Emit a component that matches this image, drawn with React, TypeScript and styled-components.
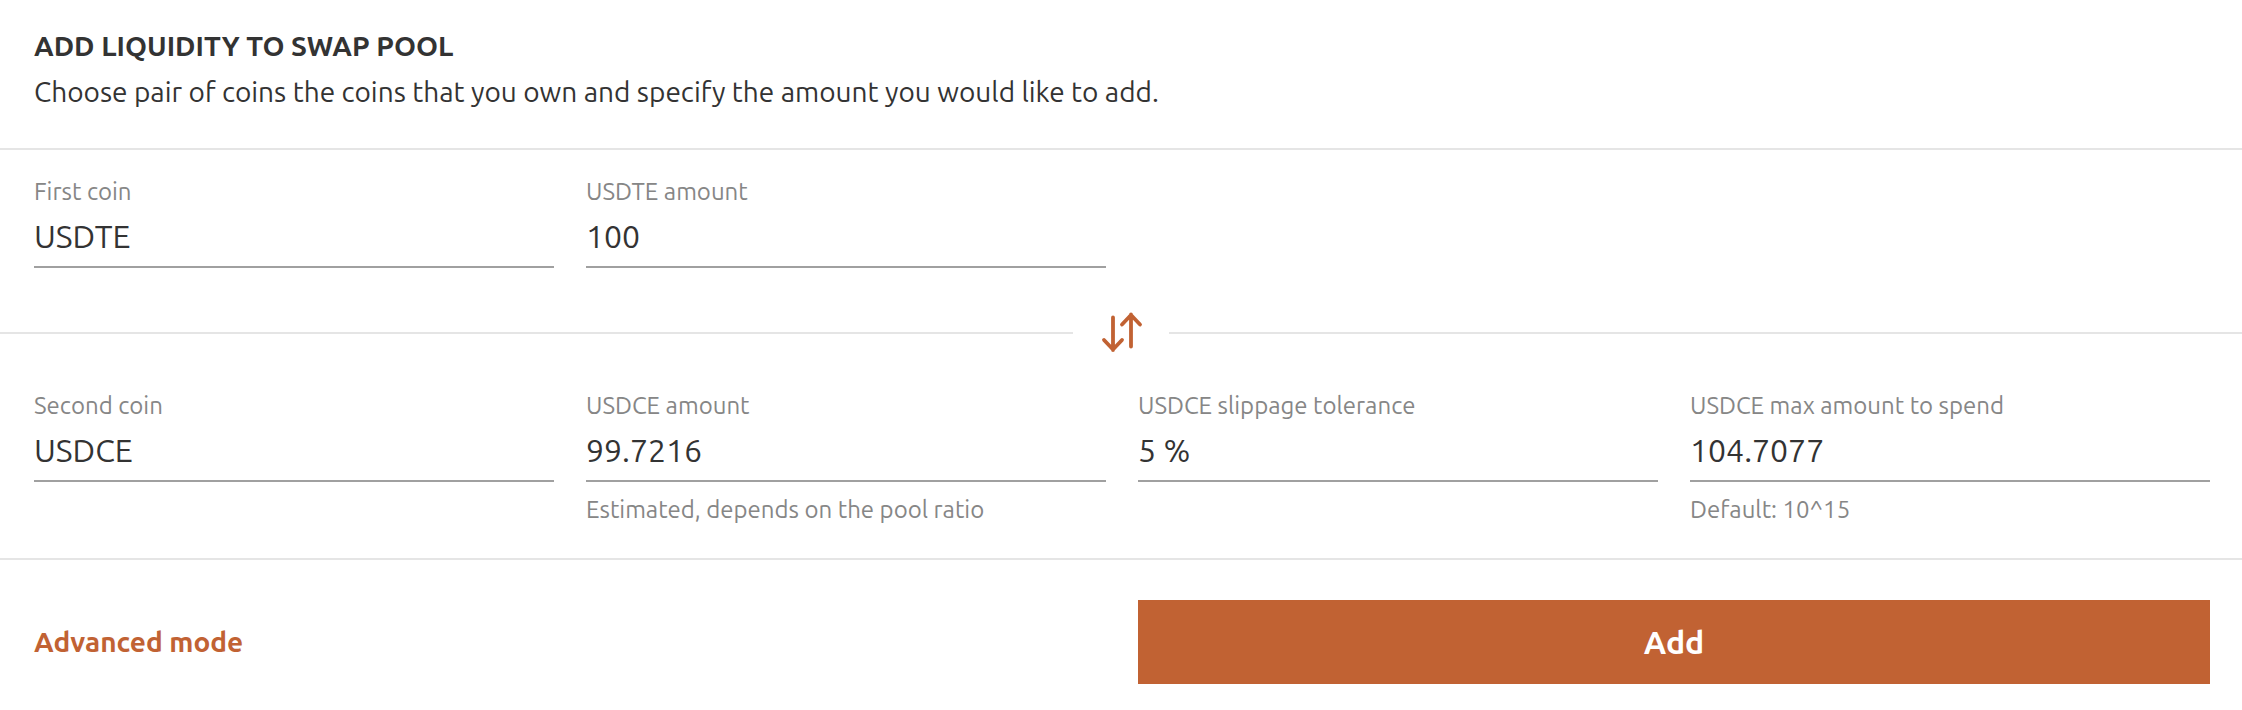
import React, { useId, useState } from "react";
import styled, { createGlobalStyle } from "styled-components";

const accent = "#c16233";
const ink = "#333333";
const muted = "#868686";
const hairline = "#e5e5e5";

const GlobalStyle = createGlobalStyle`
  *, *::before, *::after { box-sizing: border-box; }
  body {
    margin: 0;
    background: #ffffff;
    color: ${ink};
    font-family: Ubuntu, "Noto Sans", sans-serif;
  }
  input, button { font-family: inherit; }
`;

const Form = styled.form`
  display: flex;
  flex-direction: column;
`;

const Header = styled.header`
  padding: 24px 32px 34px 34px;
  border-bottom: 2px solid ${hairline};
`;

const Title = styled.h1`
  margin: 0;
  font-size: 28px;
  line-height: 44px;
  font-weight: 700;
  text-transform: uppercase;
`;

const Description = styled.p`
  margin: 2px 0 0;
  font-size: 28px;
  line-height: 44px;
`;

const FieldRow = styled.div<{ $top: number; $bottom: number }>`
  display: grid;
  grid-template-columns: repeat(4, minmax(0, 1fr));
  column-gap: 32px;
  padding: ${(p) => p.$top}px 32px ${(p) => p.$bottom}px 34px;
`;

const FieldBox = styled.div`
  display: flex;
  flex-direction: column;
`;

const Label = styled.label`
  color: ${muted};
  font-size: 24px;
  line-height: 36px;
`;

const Input = styled.input`
  width: 100%;
  height: 58px;
  padding: 0 0 4px;
  border: 0;
  border-bottom: 2px solid #a0a0a0;
  border-radius: 0;
  outline: 0;
  background: transparent;
  color: ${ink};
  font-size: 32px;

  &:focus { border-bottom-color: ${accent}; }
`;

const Hint = styled.span`
  padding-top: 10px;
  color: ${muted};
  font-size: 24px;
  line-height: 36px;
`;

const Divider = styled.div`
  display: flex;
  align-items: center;

  &::before, &::after {
    content: "";
    flex: 1;
    height: 2px;
    background: ${hairline};
  }
`;

const SwapButton = styled.button`
  display: flex;
  align-items: center;
  justify-content: center;
  width: 96px;
  height: 82px;
  padding: 0;
  border: 0;
  background: none;
  color: ${accent};
  cursor: pointer;
`;

const Footer = styled.footer`
  display: grid;
  grid-template-columns: repeat(2, minmax(0, 1fr));
  column-gap: 32px;
  padding: 40px 32px 24px 34px;
  border-top: 2px solid ${hairline};
`;

const ModeButton = styled.button`
  justify-self: start;
  padding: 0 0 2px;
  border: 0;
  background: none;
  color: ${accent};
  font-size: 28px;
  font-weight: 700;
  cursor: pointer;
`;

const SubmitButton = styled.button`
  height: 84px;
  padding: 0;
  border: 0;
  background: ${accent};
  color: #ffffff;
  font-size: 32px;
  font-weight: 700;
  cursor: pointer;
`;

type FieldProps = { label: string; initial: string; hint?: string };

function Field({ label, initial, hint }: FieldProps) {
  const id = useId();
  const [value, setValue] = useState(initial);
  return (
    <FieldBox>
      <Label htmlFor={id}>{label}</Label>
      <Input
        id={id}
        type="text"
        value={value}
        aria-describedby={hint ? `${id}-hint` : undefined}
        onChange={(e) => setValue(e.target.value)}
      />
      {hint && <Hint id={`${id}-hint`}>{hint}</Hint>}
    </FieldBox>
  );
}

function SwapIcon() {
  return (
    <svg
      width="44"
      height="44"
      viewBox="0 0 44 44"
      fill="none"
      stroke="currentColor"
      strokeWidth="3.8"
      strokeLinecap="round"
      strokeLinejoin="round"
      aria-hidden="true"
    >
      <path d="M14 6.5V39M5 29l9 9.5 9-9.5" />
      <path d="M32 35.5V3.5M23 13.5l9-9.5 9 9.5" />
    </svg>
  );
}

export default function App() {
  return (
    <>
      <GlobalStyle />
      <Form onSubmit={(e) => e.preventDefault()}>
        <Header>
          <Title>Add liquidity to swap pool</Title>
          <Description>
            Choose pair of coins the coins that you own and specify the amount you would like to add.
          </Description>
        </Header>
        <FieldRow $top={24} $bottom={24}>
          <Field label="First coin" initial="USDTE" />
          <Field label="USDTE amount" initial="100" />
        </FieldRow>
        <Divider>
          <SwapButton type="button" aria-label="Swap coins">
            <SwapIcon />
          </SwapButton>
        </Divider>
        <FieldRow $top={14} $bottom={30}>
          <Field label="Second coin" initial="USDCE" />
          <Field label="USDCE amount" initial="99.7216" hint="Estimated, depends on the pool ratio" />
          <Field label="USDCE slippage tolerance" initial="5 %" />
          <Field label="USDCE max amount to spend" initial="104.7077" hint="Default: 10^15" />
        </FieldRow>
        <Footer>
          <ModeButton type="button">Advanced mode</ModeButton>
          <SubmitButton type="submit">Add</SubmitButton>
        </Footer>
      </Form>
    </>
  );
}
